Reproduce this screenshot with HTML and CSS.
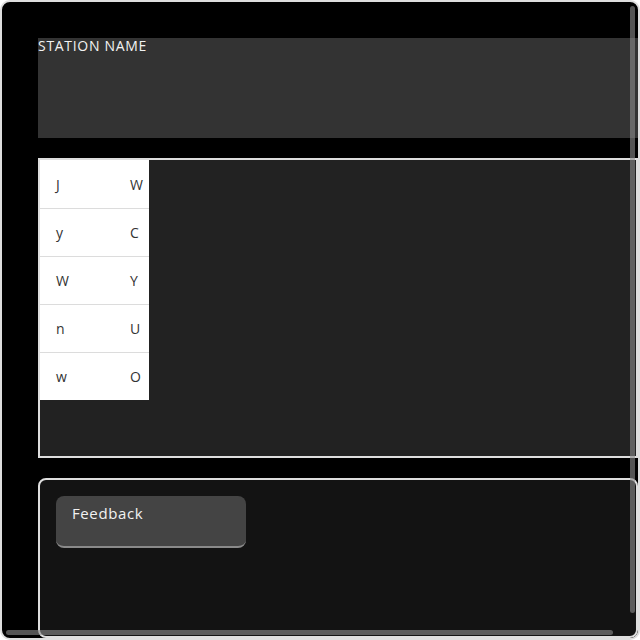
FILE: index.html
```html
<!DOCTYPE html>
<html>
<head>
<meta charset="utf-8">
<link rel="stylesheet" href="styles.css">
</head>
<body>
<div class="frame">
  <div class="content">
    <div class="station">STATION NAME</div>
    <div class="panel">
      <div class="table">
        <div class="row"><span class="c1">J</span><span class="c2">W</span></div>
        <div class="row"><span class="c1">y</span><span class="c2">C</span></div>
        <div class="row"><span class="c1">W</span><span class="c2">Y</span></div>
        <div class="row"><span class="c1">n</span><span class="c2">U</span></div>
        <div class="row"><span class="c1">w</span><span class="c2">O</span></div>
      </div>
    </div>
    <div class="feedback">
      <div class="btn">Feedback</div>
    </div>
  </div>
  <div class="vthumb"></div>
  <div class="hthumb"></div>
</div>
</body>
</html>
```
FILE: styles.css
```css
html, body {
  margin: 0;
  padding: 0;
  background: #ffffff;
}
body {
  font-family: "Open Sans", "Noto Sans", sans-serif;
}
.frame {
  position: relative;
  width: 640px;
  height: 640px;
  box-sizing: border-box;
  border: 2px solid #dedede;
  border-radius: 10px;
  background: #000;
  overflow: hidden;
}
.content {
  width: 600px;
  padding: 36px 24px 24px 36px;
  display: flex;
  flex-direction: column;
  gap: 20px;
}
.station {
  height: 100px;
  background: #333333;
  color: #f2f2f2;
  font-size: 14px;
  line-height: 16px;
  letter-spacing: 0.7px;
}
.panel {
  height: 296px;
  border: 2px solid #dedede;
  background: #222222;
}
.table {
  width: 109px;
  background: #fff;
  color: #333;
  font-size: 14px;
  letter-spacing: 0.3px;
}
.row {
  display: flex;
  align-items: center;
  height: 48px;
  box-sizing: border-box;
}
.row + .row {
  border-top: 1px solid #dcdcdc;
}
.c1 {
  width: 74px;
  padding-left: 16px;
  box-sizing: border-box;
}
.c2 {
  padding-left: 16px;
}
.feedback {
  height: 124px;
  border: 2px solid #dedede;
  border-radius: 8px;
  background: #131313;
  padding: 16px;
}
.btn {
  width: 190px;
  height: 52px;
  box-sizing: border-box;
  background: #444444;
  border-radius: 8px;
  border-bottom: 2px solid #8a8a8a;
  color: #f2f2f2;
  font-size: 15px;
  line-height: 20px;
  letter-spacing: 0.6px;
  padding: 7px 16px;
}
.vthumb {
  position: absolute;
  left: 628px;
  top: 4px;
  width: 5px;
  height: 607px;
  border-radius: 3px;
  background: rgba(140, 140, 140, 0.6);
}
.hthumb {
  position: absolute;
  left: 4px;
  top: 628px;
  width: 607px;
  height: 5px;
  border-radius: 3px;
  background: rgba(140, 140, 140, 0.6);
}
```
